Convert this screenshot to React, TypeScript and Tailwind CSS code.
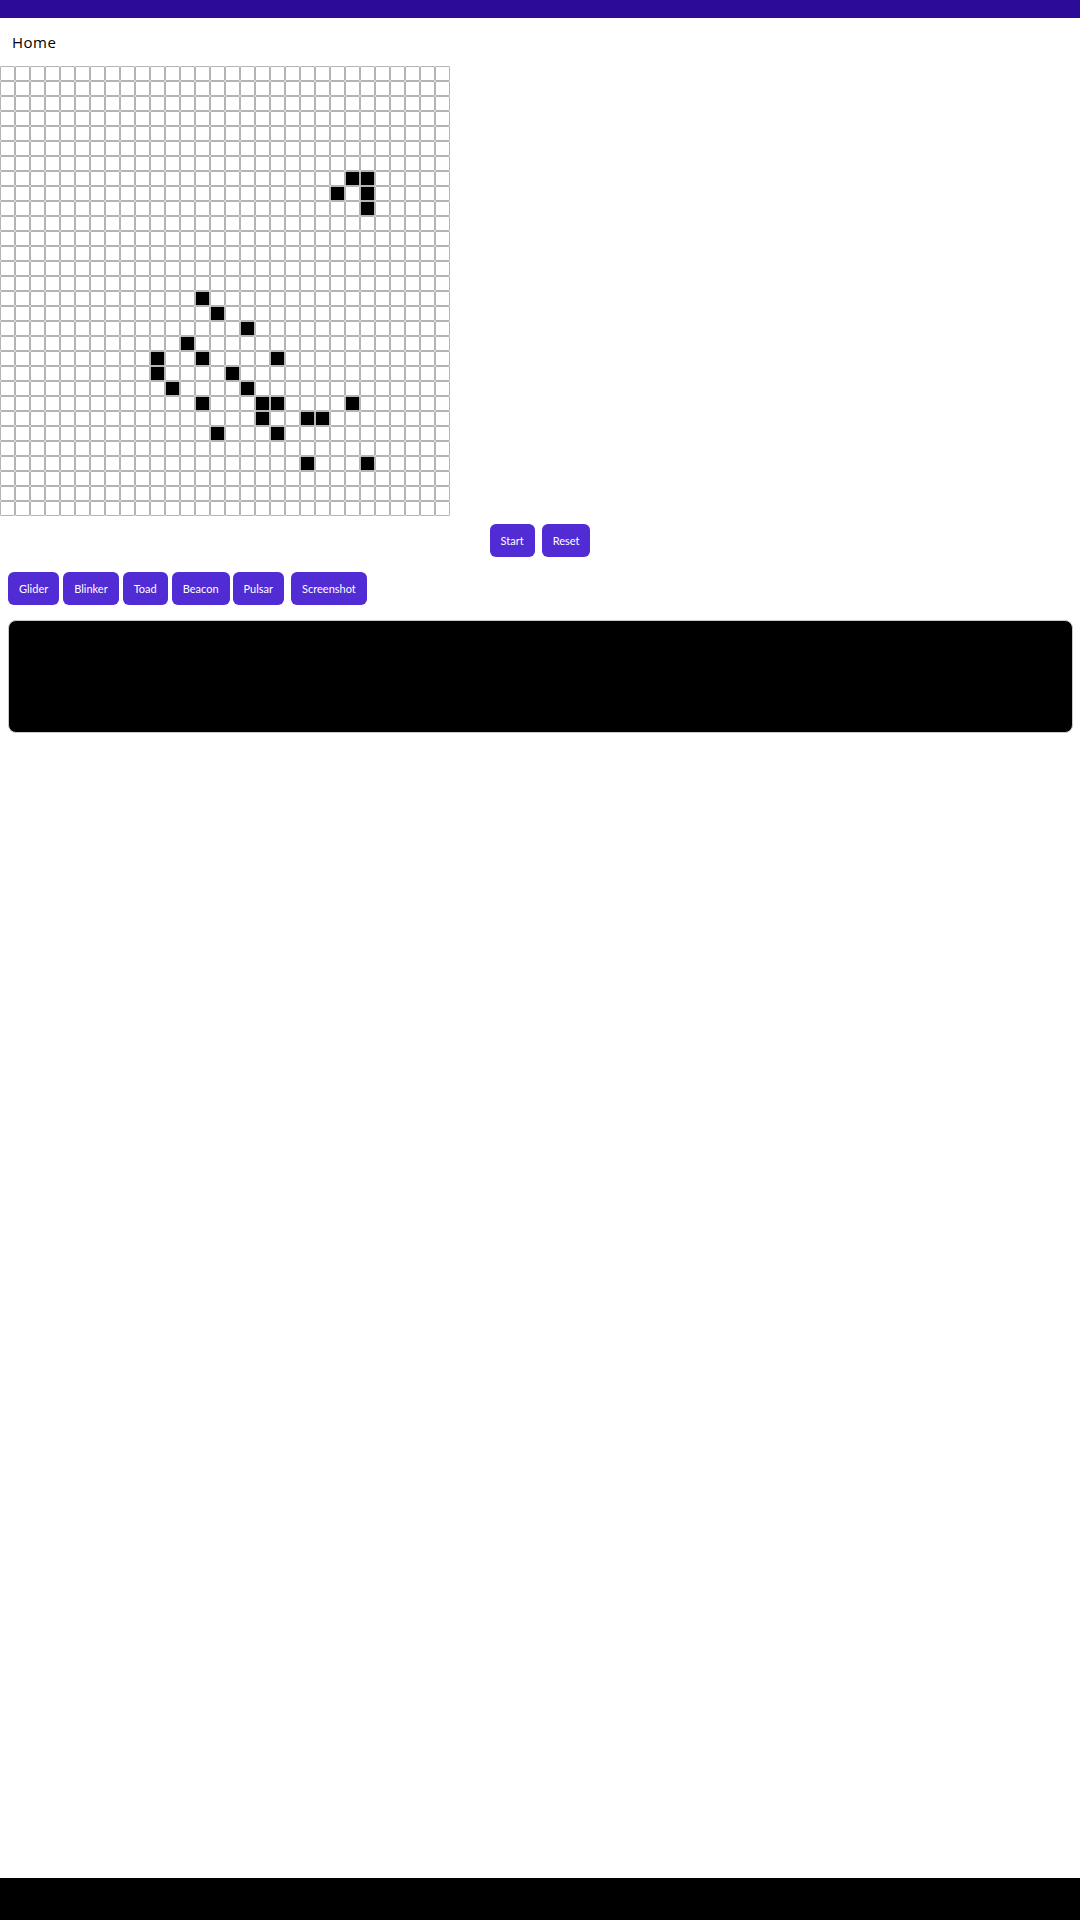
import React from "react";

const ALIVE: [number, number][] = [
  [7, 23], [7, 24], [8, 22], [8, 24], [9, 24],
  [15, 13], [16, 14], [17, 16], [18, 12],
  [19, 10], [19, 13], [19, 18],
  [20, 10], [20, 15],
  [21, 11], [21, 16],
  [22, 13], [22, 17], [22, 18], [22, 23],
  [23, 17], [23, 20], [23, 21],
  [24, 14], [24, 18],
  [26, 20], [26, 24],
];

const aliveSet = new Set(ALIVE.map(([r, c]) => `${r}-${c}`));

function Btn({ label, className = "" }: { label: string; className?: string }) {
  return (
    <button
      className={
        "h-[33px] px-[11px] rounded-md bg-[#512bd4] text-white text-[11px] leading-none " +
        className
      }
      style={{ fontFamily: "Lato, 'Liberation Sans', sans-serif" }}
    >
      {label}
    </button>
  );
}

export default function App() {
  const rows = Array.from({ length: 30 }, (_, i) => i);
  const cols = Array.from({ length: 30 }, (_, i) => i);
  return (
    <div className="flex flex-col h-[1920px] w-[1080px] bg-white">
      <div className="h-[18px] bg-[#2b0b98] shrink-0" />
      <div
        className="h-[48px] flex items-center pl-[12px] text-[15px] tracking-[0.5px] text-black font-medium"
        style={{ fontFamily: "'Open Sans', 'Noto Sans', sans-serif" }}
      >
        Home
      </div>
      <div className="flex flex-col w-[450px]">
        {rows.map((r) => (
          <div key={r} className="flex">
            {cols.map((c) => (
              <div
                key={c}
                className={
                  "w-[15px] h-[15px] border border-[#b4b4b4] rounded-[1px] " +
                  (aliveSet.has(`${r}-${c}`) ? "bg-black" : "bg-white")
                }
              />
            ))}
          </div>
        ))}
      </div>
      <div className="flex justify-center gap-[7px] mt-[8px]">
        <Btn label="Start" />
        <Btn label="Reset" />
      </div>
      <div className="flex mt-[15px] pl-[8px]">
        <Btn label="Glider" />
        <Btn label="Blinker" className="ml-[4px]" />
        <Btn label="Toad" className="ml-[4px]" />
        <Btn label="Beacon" className="ml-[4px]" />
        <Btn label="Pulsar" className="ml-[3px]" />
        <Btn label="Screenshot" className="ml-[7px]" />
      </div>
      <div className="mt-[15px] ml-[8px] mr-[7px] h-[113px] bg-black border border-[#c8c8c8] rounded-lg" />
      <div className="flex-1" />
      <div className="h-[42px] bg-black shrink-0" />
    </div>
  );
}
